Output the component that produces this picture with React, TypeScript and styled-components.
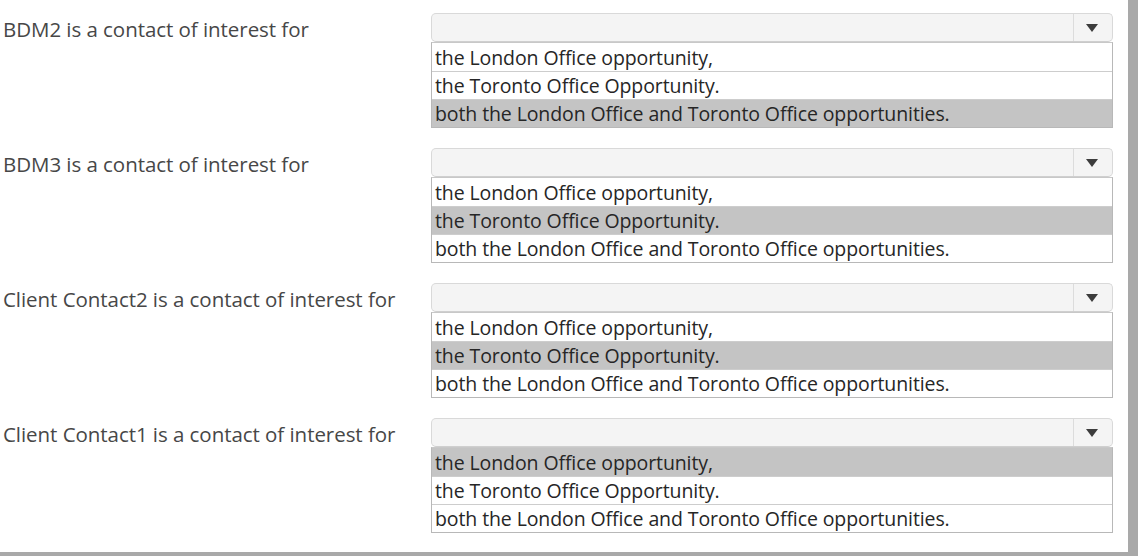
import React from "react";
import styled, { createGlobalStyle } from "styled-components";

const Global = createGlobalStyle`
  html, body { margin: 0; padding: 0; background: #ffffff; }
  body { font-family: "Open Sans", "Noto Sans", sans-serif; }
`;

const Frame = styled.div`
  box-sizing: border-box;
  width: 1138px;
  height: 556px;
  background: #ffffff;
  border-right: 10px solid #a9a9a9;
  border-bottom: 4px solid #a9a9a9;
  padding: 13px 0 0 3px;
  display: flex;
  flex-direction: column;
  gap: 20px;
`;

const Question = styled.div`
  display: grid;
  grid-template-columns: 428px 682px;
  align-items: start;
`;

const Label = styled.div`
  height: 31px;
  display: flex;
  align-items: center;
  font-size: 20.5px;
  letter-spacing: -0.05px;
  color: #474747;
  white-space: nowrap;
`;

const Field = styled.div`
  display: flex;
  flex-direction: column;
`;

const Combo = styled.div`
  box-sizing: border-box;
  height: 29px;
  display: flex;
  background: #f4f4f4;
  border: 1px solid #d9d9d9;
  border-bottom-color: #cfcfcf;
  border-radius: 5px;
`;

const ComboValue = styled.div`
  flex: 1;
`;

const ArrowButton = styled.div`
  width: 36px;
  border-left: 1px solid #dcdcdc;
  display: flex;
  align-items: center;
  justify-content: center;
  padding-right: 2px;
`;

const List = styled.div`
  box-sizing: border-box;
  border: 1px solid #b8b8b8;
  border-top-color: #c8c8c8;
  background: #ffffff;
  display: flex;
  flex-direction: column;
`;

const Option = styled.div<{ $selected?: boolean }>`
  box-sizing: border-box;
  height: 28px;
  padding: 0 3px;
  display: flex;
  align-items: center;
  font-size: 19.5px;
  letter-spacing: -0.1px;
  color: #262626;
  white-space: nowrap;
  background: ${(p) => (p.$selected ? "#c4c4c4" : "#ffffff")};
  & + & {
    border-top: 1px solid #cdcdcd;
  }
`;

const options = [
  "the London Office opportunity,",
  "the Toronto Office Opportunity.",
  "both the London Office and Toronto Office opportunities.",
];

const questions = [
  { label: "BDM2 is a contact of interest for", selected: 2 },
  { label: "BDM3 is a contact of interest for", selected: 1 },
  { label: "Client Contact2 is a contact of interest for", selected: 1 },
  { label: "Client Contact1 is a contact of interest for", selected: 0 },
];

const Arrow = () => (
  <svg width="12" height="8" viewBox="0 0 12 8">
    <polygon points="0,0 12,0 6,8" fill="#3c3c3c" />
  </svg>
);

export default function App() {
  return (
    <>
      <Global />
      <Frame>
        {questions.map((q) => (
          <Question key={q.label}>
            <Label>{q.label}</Label>
            <Field>
              <Combo>
                <ComboValue />
                <ArrowButton>
                  <Arrow />
                </ArrowButton>
              </Combo>
              <List>
                {options.map((o, i) => (
                  <Option key={o} $selected={i === q.selected}>
                    {o}
                  </Option>
                ))}
              </List>
            </Field>
          </Question>
        ))}
      </Frame>
    </>
  );
}
